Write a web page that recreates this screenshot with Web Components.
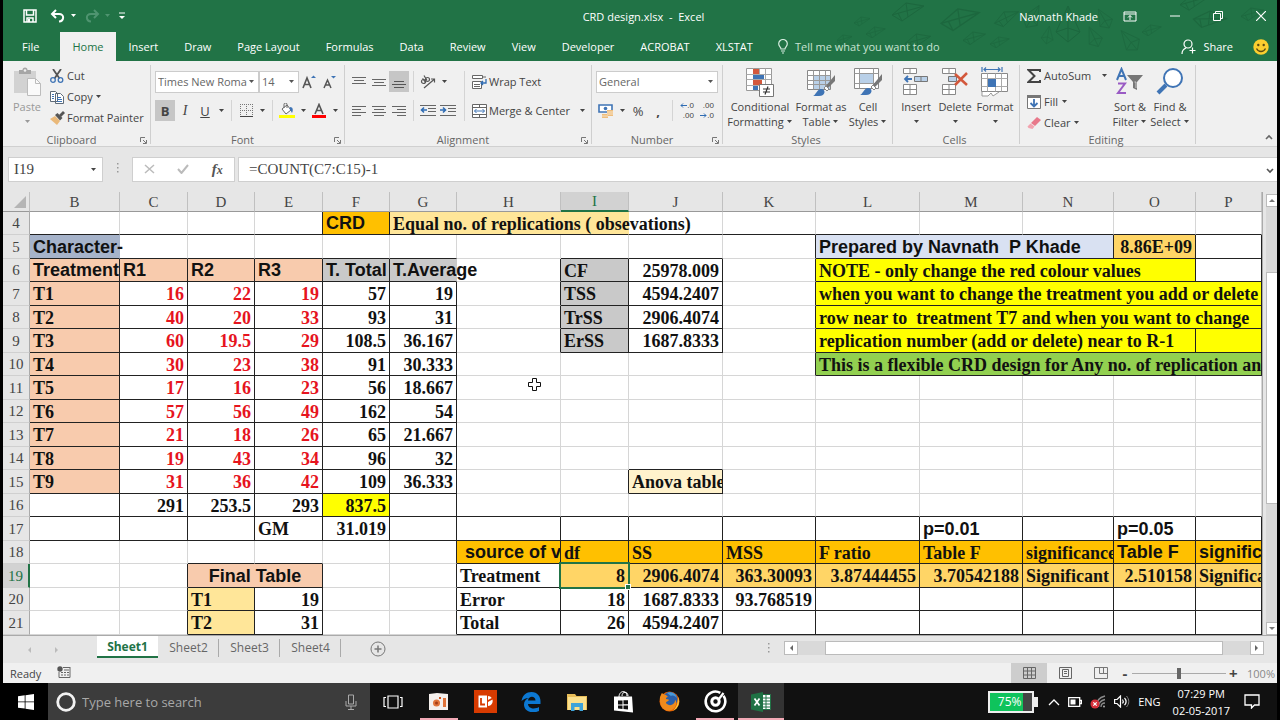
<!DOCTYPE html>
<html lang="en">
<head>
<meta charset="utf-8">
<title>CRD design.xlsx - Excel</title>
<style>
html, body { height: 100%; margin: 0; background: #000; }
body { font-family: "Open Sans", "Noto Sans", sans-serif; font-size: 11px; color: #444; overflow: hidden; }
</style>
</head>
<body>
<excel-window></excel-window>

<script>
/**
 * Spreadsheet window on a desktop with a taskbar.
 * Every part of the window is its own custom element, see the bottom of the script
 * for the element that puts them together.
 */

const base = `
 * { box-sizing: border-box; }
 button, input, select { font: inherit; color: inherit; background: none; border: 0; border-radius: 0; padding: 0; margin: 0; outline: 0; }
 button { cursor: default; white-space: nowrap; }
 svg { display: block; }
`;

function define(name, style, html) {
    customElements.define(name, class extends HTMLElement {
        constructor() {
            super();
            this.attachShadow({mode: 'open'});
        }
        connectedCallback() {
            const markup = typeof html === 'function' ? html(this) : html;
            this.shadowRoot.innerHTML = `<style>${base}${style}</style>${markup}`;
        }
    });
}

// [width, height, content]
const icons = {
    save: [14, 14, '<path d="M1 1h12v12H1z M3.500 1v5h7V1 M4 13V9h6v4" fill="none" stroke="#fff" stroke-width="1.500"/><path d="M5 10h2v3H5z" fill="#fff"/>'],
    undo: [16, 14, '<path d="M6 1L2 5l4 4M2.500 5H9c6 0 5 7 0 7.500" fill="none" stroke="#fff" stroke-width="2"/>'],
    redo: [16, 14, '<path d="M10 1l4 4-4 4M13.500 5H7C1 5 2 12 7 12.500" fill="none" stroke="#4f9470" stroke-width="2"/>'],
    customize: [8, 8, '<path d="M1 1h6" stroke="#fff"/><path d="M1 4h6L4 7z" fill="#fff"/>'],
    drop: [7, 4, '<path d="M1 0h5L3.500 3z" fill="currentColor"/>'],
    ribbonOpts: [14, 11, '<path d="M1 1h12v9H1zM1 3h12M7 9V4.500M5 6.500l2-2 2 2" fill="none" stroke="#fff"/>'],
    minimize: [10, 2, '<path d="M0 1h10" stroke="#fff"/>'],
    restore: [10, 10, '<path d="M.5 2.500h7v7h-7zM2.500 2.500v-2h7v7h-2" fill="none" stroke="#fff"/>'],
    close: [10, 10, '<path d="M0 0l10 10M10 0L0 10" stroke="#fff" stroke-width="1.200"/>'],
    bulb: [10, 15, '<path d="M3 10c0-2-2.300-2.500-2.300-5.200a4.300 4.300 0 0 1 8.600 0C9.300 7.500 7 8 7 10zM3 12h4M4 14h2" fill="none" stroke="#d5ecdf" stroke-width="1.200"/>'],
    person: [15, 15, '<circle cx="7" cy="5" r="4" fill="none" stroke="#fff" stroke-width="1.200"/><path d="M1 15c0-3 1.500-5 4-6M11.500 8.500v6M8.500 11.500h6" fill="none" stroke="#fff" stroke-width="1.200"/>'],
    smile: [16, 16, '<circle cx="8" cy="8" r="7.700" fill="#fbce2f"/><circle cx="5.300" cy="6" r="1.200" fill="#5b4a12"/><circle cx="10.700" cy="6" r="1.200" fill="#5b4a12"/><path d="M3.500 9.500c2 4 7 4 9 0" fill="none" stroke="#5b4a12" stroke-width="1.300"/>'],
    paste: [28, 30, '<path d="M1 4h22v22H1z" fill="#d2d2d2"/><path d="M6 3h3.500a2.500 2.500 0 0 1 5 0H18v4H6z" fill="#a6a6a6"/><circle cx="12" cy="3.500" r="1.300" fill="#f0f0f0"/><path d="M14.500 11.500h8l5 5v12h-13z" fill="#fafafa" stroke="#bcbcbc"/><path d="M22.500 11.500v5h5" fill="none" stroke="#bcbcbc"/>'],
    cut: [14, 14, '<path d="M3 0l6.500 9.500M11 0L4.500 9.500" stroke="#555" stroke-width="1.800"/><circle cx="3" cy="11" r="2.300" fill="none" stroke="#3f74b5" stroke-width="1.300"/><circle cx="10.500" cy="11" r="2.300" fill="none" stroke="#3f74b5" stroke-width="1.300"/>'],
    copy: [14, 14, '<path d="M.5 1.500h5l2 2v8h-7zM5.500 3.500h5l3 3v7h-8z" fill="#fff" stroke="#5f6b78"/><path d="M2 4.500h2M2 6.500h2M2 8.500h2M7 7.500h4M7 9.500h5M7 11.500h5" stroke="#3f74b5"/>'],
    painter: [15, 14, '<path d="M0 8l5-3 5 5-3 4z" fill="#eab97a"/><path d="M5 4l2.500-2 5 5L10 9.500z" fill="#555"/><path d="M9 4l4-4 2 2-4 4z" fill="#555"/>'],
    growFont: [14, 14, '<path d="M1 13L5 3l4 10M2.500 9.500h5" fill="none" stroke="#555" stroke-width="1.600"/><path d="M9 3h5l-2.500-2.500z" fill="#3f74b5"/>'],
    shrinkFont: [14, 14, '<path d="M2 13l3.500-8L9 13M3.500 10h4" fill="none" stroke="#555" stroke-width="1.500"/><path d="M9 1h5l-2.500 2.500z" fill="#3f74b5"/>'],
    borders: [13, 13, '<path d="M.5 0v12M12.500 0v12M0 .5h13M6.500 0v12M0 6.500h13" stroke="#777" stroke-dasharray="1 1"/><path d="M0 12.500h13" stroke="#444"/>'],
    fillColor: [16, 16, '<path d="M3 6l5-4 4 5-5 4z" fill="#fff" stroke="#666"/><path d="M5 5V1.500a1.500 1.500 0 0 1 3 0V5" fill="none" stroke="#666"/><path d="M11 4c3 0 3.500 3 2 6-1-1-1-3-2.500-4z" fill="#3f74b5"/><path d="M0 12h16v3H0z" fill="#ff0"/>'],
    fontColor: [14, 16, '<path d="M3 11L7 1.500 11 11M4.500 7.500h5" fill="none" stroke="#555" stroke-width="1.600"/><path d="M0 12h14v3H0z" fill="#f00"/>'],
    top: [14, 12, '<path d="M0 1.500h14M2 4.500h10M0 7.500h14" stroke="#666"/>'],
    middle: [14, 12, '<path d="M0 3.500h14M2 6.500h10M0 9.500h14" stroke="#666"/>'],
    bottom: [14, 14, '<path d="M2 6.500h10M0 9.500h14M2 12.500h10" stroke="#555"/>'],
    left: [14, 12, '<path d="M0 1.500h14M0 4.500h9M0 7.500h14M0 10.500h9" stroke="#666"/>'],
    center: [14, 12, '<path d="M0 1.500h14M2 4.500h10M0 7.500h14M2 10.500h10" stroke="#666"/>'],
    right: [14, 12, '<path d="M0 1.500h14M5 4.500h9M0 7.500h14M5 10.500h9" stroke="#666"/>'],
    orient: [16, 14, '<g fill="none" stroke="#555" stroke-width="1.200"><circle cx="3.500" cy="6.500" r="2"/><path d="M2.500 3.500l3.500 4"/><circle cx="7.500" cy="4.500" r="2"/><path d="M4 .5l3 5M4 13l10-8.500M11 4h3.500v3.500"/></g>'],
    outdent: [16, 13, '<path d="M0 1.500h16M8 4.500h8M8 7.500h8M0 11.500h16" stroke="#666"/><path d="M7 6H1.500M4 3.500L1.500 6 4 8.500" fill="none" stroke="#2f6cb3" stroke-width="1.600"/>'],
    indent: [16, 13, '<path d="M0 1.500h16M8 4.500h8M8 7.500h8M0 11.500h16" stroke="#666"/><path d="M0 6h5.500M3 3.500L5.500 6 3 8.500" fill="none" stroke="#2f6cb3" stroke-width="1.600"/>'],
    wrap: [15, 14, '<path d="M.5.500h10v3H.5zM.5 6.500h9v7h-9z" fill="#fff" stroke="#666"/><path d="M11 2h3M2 9.500h6M2 11.500h6" stroke="#666"/><path d="M14 4v4h-5M11 6L9 8l2 2" fill="none" stroke="#2f6cb3" stroke-width="1.300"/>'],
    merge: [15, 14, '<path d="M.5.500h14v13H.5zM.5 3.500h14M.5 10.500h14M7.500.5v3M7.500 10.500v3" fill="#fff" stroke="#666"/><path d="M2.500 7h10M4.500 5l-2 2 2 2M10.500 5l2 2-2 2" fill="none" stroke="#3f74b5"/>'],
    currency: [16, 14, '<path d="M1 1h13v7H1z" fill="#fff" stroke="#3f74b5" stroke-width="1.600"/><circle cx="7.500" cy="4.500" r="1.800" fill="#3f74b5"/><path d="M9 6h6v6H9z" fill="#eebd7c"/><path d="M4 10h6v4H4z" fill="#eebd7c"/><path d="M4 12h6M9 8h6M9 10h6" stroke="#f7e3c6"/>'],
    numLeft: [7, 5, '<path d="M7 2.500H1M3 .5l-2 2 2 2" fill="none" stroke="#2f6cb3"/>'],
    numRight: [7, 5, '<path d="M0 2.500h6M4 .5l2 2-2 2" fill="none" stroke="#2f6cb3"/>'],
    condFmt: [28, 30, '<path d="M.5 1.500h25v22H.5z" fill="#fff" stroke="#999"/><path d="M.5 7.500h25M.5 12.500h25M.5 18.500h25M7.500 1.500v22M13.500 1.500v22M19.500 1.500v22" stroke="#aaa"/><path d="M7 2h6v5H7z" fill="#d3583c"/><path d="M7 8h11v4H7z" fill="#3f74b5"/><path d="M7 13h9v5H7z" fill="#d3583c"/><path d="M7 19h5v4H7z" fill="#3f74b5"/><path d="M13.500 17.500h14v12h-14z" fill="#fff" stroke="#777"/><path d="M17 22h7M17 25h7M22 19.500l-3 8" stroke="#333" stroke-width="1.200"/>'],
    fmtTable: [28, 30, '<path d="M.5 3.500h23v19H.5z" fill="#fff" stroke="#888"/><path d="M6 8h17v14H6z" fill="#b9d0e8"/><path d="M.5 8.500h23M.5 13.500h23M.5 17.500h23M6.500 3.500v19M12.500 3.500v19M18.500 3.500v19" stroke="#999"/><path d="M28 8v6l-8 8-2-2z" fill="#777"/><path d="M19 19l3 3-2 2-3-3z" fill="#fff" stroke="#888"/><path d="M6 29c3-1 4-7 8-7 5 0 5 7-2 7z" fill="#3f74b5"/>'],
    cellStyles: [28, 30, '<path d="M.5 1.500h24v20H.5z" fill="#fff" stroke="#888"/><path d="M.5 6.500h24M.5 16.500h24M5.500 1.500v20M19.500 1.500v20" stroke="#999"/><path d="M6 7h13v9H6z" fill="#b9d0e8"/><path d="M28 7v6l-8 8-2-2z" fill="#777"/><path d="M19 18l3 3-2 2-3-3z" fill="#fff" stroke="#888"/><path d="M6 28c3-1 4-7 8-7 5 0 5 7-2 7z" fill="#3f74b5"/>'],
    insert: [26, 30, '<path d="M.5 1.500h13v5H.5zM7 1.500v5M.5 17.500h13v10H.5zM.5 22.500h13M7 17.500v10" fill="#fff" stroke="#888"/><path d="M11.500 9.500h13v5h-13zM18 9.500v5" fill="#b9d0e8" stroke="#777"/><path d="M9 12H2M5 9l-3 3 3 3" fill="none" stroke="#3f74b5" stroke-width="1.800"/>'],
    delete: [26, 30, '<path d="M.5 1.500h13v5H.5zM7 1.500v5M.5 17.500h13v10H.5zM.5 22.500h13M7 17.500v10" fill="#fff" stroke="#888"/><path d="M6.500 9.500h8v5h-8z" fill="#b9d0e8" stroke="#777"/><path d="M13 7l12 11M25 6L13 18" stroke="#d3583c" stroke-width="2.500"/>'],
    format: [28, 30, '<path d="M1 0v5M21 0v5M3 2.500h16M5 .5L3 2.500l2 2M17 .5l2 2-2 2" fill="none" stroke="#3f74b5" stroke-width="1.200"/><path d="M.5 6.500h26v18H.5z" fill="#fff" stroke="#888"/><path d="M.5 11.500h26M.5 19.500h26M6.500 6.500v18M14.500 6.500v18M20.500 6.500v18" stroke="#aaa"/><path d="M7 12h8v8H7z" fill="#3f74b5"/><path d="M1 25v4h6l3-3 2 3 6-4" fill="#fff" stroke="#999"/>'],
    sum: [14, 14, '<path d="M13 3V1H1.500l6 6-6 6H13v-2" fill="none" stroke="#444" stroke-width="2"/>'],
    fill: [14, 14, '<path d="M.5.500h13v13H.5z" fill="#fff" stroke="#777"/><path d="M0 0h14v3H0z" fill="#777"/><path d="M7 4v7M3.500 8L7 11.500 10.500 8" fill="none" stroke="#3f74b5" stroke-width="1.800"/>'],
    clear: [14, 12, '<path d="M4 6l6-6 4 3-6 6z" fill="#e8788a"/><path d="M3.500 6.500l4 3-2 2.500-4-1-1-1.500z" fill="#f2a3af"/>'],
    sort: [28, 30, '<path d="M1 13L5.500 2 10 13M2.500 9h6" fill="none" stroke="#3f74b5" stroke-width="2"/><path d="M2 16.500h7L2 26h8" fill="none" stroke="#9a5bc4" stroke-width="2"/><path d="M11 8h16l-6 7v8l-4-2v-6z" fill="#777"/><path d="M18.500 15h1.500v6" stroke="#ccc" fill="none"/>'],
    find: [28, 30, '<circle cx="17" cy="11" r="9" fill="#fff" stroke="#3f74b5" stroke-width="2"/><path d="M10 18l-8 8" stroke="#3f74b5" stroke-width="4"/>'],
    launcher: [7, 7, '<path d="M.5 5V.5H5M3 3l3 3M6.500 3v3.500H3" fill="none" stroke="#777"/>'],
    up: [8, 6, '<path d="M1 5l3-3 3 3" fill="none" stroke="#666" stroke-width="1.600"/>'],
    down: [8, 6, '<path d="M1 1l3 3 3-3" fill="none" stroke="#555" stroke-width="1.600"/>'],
    cancel: [11, 10, '<path d="M1 1l9 8M10 1L1 9" stroke="#bbb" stroke-width="1.500"/>'],
    accept: [12, 10, '<path d="M1 5l3.500 4L11 1" fill="none" stroke="#bbb" stroke-width="2"/>'],
    dots: [3, 12, '<path d="M1 1h1.500v1.500H1zM1 5h1.500v1.500H1zM1 9h1.500v1.500H1z" fill="#999"/>'],
    corner: [12, 12, '<path d="M12 0v12H0z" fill="#b5b5b5"/>'],
    arrowL: [5, 8, '<path d="M4 1v6L1 4z" fill="currentColor"/>'],
    arrowR: [5, 8, '<path d="M1 1v6l3-3z" fill="currentColor"/>'],
    arrowU: [8, 5, '<path d="M1 4h6L4 1z" fill="currentColor"/>'],
    arrowD: [8, 5, '<path d="M1 1h6L4 4z" fill="currentColor"/>'],
    plus: [16, 16, '<circle cx="8" cy="8" r="7" fill="none" stroke="#777"/><path d="M8 4.500v7M4.500 8h7" stroke="#777" stroke-width="1.500"/>'],
    macro: [14, 12, '<circle cx="3" cy="3" r="2.700" fill="#555"/><path d="M6 1.500h7M2 6v5.500h11V1M7 4h5" fill="none" stroke="#666"/><path d="M4 6.500h8M4 9h8" stroke="#666" stroke-dasharray="2 1"/>'],
    viewNormal: [13, 12, '<path d="M.5.500h12v11H.5zM.5 4h12M.5 8h12M4.500.5v11M8.500.5v11" fill="none" stroke="#666"/>'],
    viewLayout: [13, 12, '<path d="M.5.500h12v11H.5zM3.500 2.500h6v7h-6zM5 4.500h3M5 6.500h3" fill="none" stroke="#666"/>'],
    viewBreak: [14, 12, '<path d="M.5.500h13v11H.5zM5.500.5v6M9.500.5v6M5.500 6.500h8" fill="none" stroke="#777"/>'],
    start: [16, 16, '<path d="M0 2.300l6.700-1v6.200H0zM7.500 1.200L16 0v7.500H7.500zM0 8.300h6.700v6.300L0 13.700zM7.500 8.300H16V16l-8.500-1.200z" fill="#fff"/>'],
    cortana: [20, 20, '<circle cx="10" cy="10" r="8.300" fill="none" stroke="#f2f2f2" stroke-width="2.800"/>'],
    mic: [12, 16, '<path d="M3.500 1h5v9h-5z" fill="none" stroke="#aaa"/><path d="M1 7v5h10V7M6 12v3M3 15.500h6" fill="none" stroke="#aaa"/>'],
    taskView: [20, 14, '<path d="M5 1h10v12H5zM3 2.500H1v9h2M17 2.500h2v9h-2" fill="none" stroke="#fff" stroke-width="1.200"/>'],
    recorder: [20, 18, '<path d="M0 1l8-1 11 1v16H0z" fill="#f5f0ed"/><circle cx="7.500" cy="10" r="3.500" fill="#e0733a"/><circle cx="7.500" cy="10" r="1.500" fill="#a33d16"/><path d="M14 5h3v9h-3z" fill="#e0733a"/><path d="M10 4h2v2h-2z" fill="#d0551f"/>'],
    lp: [23, 23, '<path d="M0 0h23v23H0z" fill="#d83b01"/><path d="M4.500 5.500h8.500v12H4.500z" fill="#fff"/><path d="M7 8v6.500h4" fill="none" stroke="#d83b01" stroke-width="1.800"/><path d="M14 6c1.500 0 3 .8 3.700 2L14 10zM18.500 9.500c.8 3.500-1.200 6.500-4.500 6.500v-4z" fill="#fff"/>'],
    edge: [20, 20, '<path d="M0.500 9C1.500 3 5.500 0 10.500 0c6 0 9 4.500 9 9.500V12H7c.3 5 7 5.500 11 3v4c-6 3-15 1-15-6.500C3 9.500 5 7 7.500 6 4.500 6 2 7.500.5 9zM7 8.500h7.500C14.500 3.500 7.500 3.500 7 8.500z" fill="#0c78d2"/>'],
    explorer: [20, 18, '<path d="M0 1h8l1.500 2H20v14H0z" fill="#e8bd58"/><path d="M1 4h18v13H1z" fill="#fbe08d"/><path d="M4 10h12v8h-3.500v-4h-5v4H4z" fill="#3ea3d9"/>'],
    store: [20, 22, '<path d="M6 6c0-7 8-7 8-1M9 5c0-5 6-5 6 0" fill="none" stroke="#fff"/><path d="M1 5.500h18l1 16-19-2z" fill="#fff"/><path d="M5 9.500h4.500v4H5zM10.500 9.300H15v4h-4.500zM5 14.500h4.500v3.500L5 17.600zM10.500 14.500H15v4l-4.500-.5z" fill="#111"/>'],
    firefox: [21, 21, '<circle cx="10.500" cy="10.500" r="10" fill="#e66000"/><circle cx="11" cy="8.500" r="7.500" fill="#2a5ea8"/><path d="M8 2c3-2 9 0 10 5-2-2-4-3-6-2z" fill="#4a9ad8"/><path d="M1 6c1-2 1-3 2-4 1 1 2 1.500 4 2l2 2c-2 0-2 1-2 2 2 0 3 1 3 1-1 2-3 1-3 3 3 4 9 2 9-3 2 1 2 7-3 10-8 3-13-4-12-13z" fill="#f08a1c"/><path d="M19 6c2 5 1 11-5 14 3-3 5-7 5-14z" fill="#ffcb3c"/>'],
    groove: [23, 23, '<path d="M19.500 5.800a9.800 9.800 0 1 1-3.200-2.900" fill="none" stroke="#fff" stroke-width="2.600"/><circle cx="11.500" cy="11.500" r="3.700" fill="none" stroke="#fff" stroke-width="3"/><path d="M15 9l4.500-6" stroke="#fff" stroke-width="2.200"/>'],
    excel: [20, 20, '<path d="M10 2.500h9.500v15H10z" fill="#fff" stroke="#217346"/><path d="M11 6h8M11 9h8M11 12h8M11 15h8M15 3v14" stroke="#217346"/><path d="M0 2.500L12 0v20L0 17.500z" fill="#1f7244"/><path d="M3.500 6.500l5 7M8.500 6.500l-5 7" stroke="#fff" stroke-width="1.700"/>'],
    chevUp: [12, 8, '<path d="M1 7l5-5 5 5" fill="none" stroke="#fff" stroke-width="1.300"/>'],
    power: [14, 10, '<path d="M.7.700h11v8.600H.7zM12 3.500h1.500v3H12" fill="none" stroke="#fff" stroke-width="1.300"/><path d="M2.500 2.500h5v5h-5z" fill="#fff"/>'],
    wifi: [16, 15, '<path d="M6 13C6 7 9 3.500 15 2M8.500 13c0-4 2-6.500 6.500-7.500M11 13c0-2.500 1.500-4 4-4" fill="none" stroke="#8a8a8a" stroke-width="1.300"/><circle cx="14" cy="12.500" r="1" fill="#aaa"/><circle cx="5" cy="10" r="4.500" fill="#d6303a"/><path d="M3.300 8.300l3.400 3.400M6.700 8.300l-3.400 3.400" stroke="#fff" stroke-width="1.200"/>'],
    volume: [16, 13, '<path d="M.6 4.500h2.500L6.500 1v11L3 8.500H.6z" fill="none" stroke="#fff" stroke-width="1.200"/><path d="M8.500 4.500c1 1.300 1 2.700 0 4M10.500 2.800c2 2.300 2 5 0 7.400" fill="none" stroke="#fff" stroke-width="1.200"/><path d="M12.500 1c3 3.500 3 7.500 0 11" fill="none" stroke="#888"/>'],
    notify: [16, 15, '<path d="M1 1h14v10h-4.500L7.500 14v-3H1z" fill="none" stroke="#fff" stroke-width="1.300"/>'],
    cross: [15, 15, '<path d="M5.500 1.500h4v4h4v4h-4v4h-4v-4h-4v-4h4z" fill="#fff" stroke="#111"/>']
};

define('ui-icon', ':host { display: inline-block; flex: none; }', el => {
    const [w, h, body] = icons[el.getAttribute('name')];
    return `<svg width="${w}" height="${h}" viewBox="0 0 ${w} ${h}" aria-hidden="true">${body}</svg>`;
});

const ic = name => `<ui-icon name="${name}"></ui-icon>`;

/* ---------- title bar and ribbon tabs ---------- */

// paper planes behind the title: wide ones fly left, tall ones fly up or down
const wide = 'M0 12L14 0L32 3L10 18ZM14 0L16 14M0 12L32 3M6 10L10 18';
const tall = 'M12 0L24 26L12 36L0 26ZM12 0V36M0 26L12 22L24 26';
const planes = [
    [wide, 892, 3, 1, 0], [wide, 941, 9, 1.2, 0], [wide, 854, 17, .5, 0], [wide, 866, 27, .6, 0], [wide, 836, 35, .5, 0],
    [wide, 905, 34, .8, 0], [wide, 963, 32, .7, 0], [wide, 990, 37, .6, 0], [wide, 995, 12, .8, -10], [wide, 1142, 25, .6, 0],
    [tall, 1056, 6, 1, 0], [tall, 1042, 26, .5, 10], [tall, 1086, 26, .6, -25], [tall, 1120, 28, .7, -40], [tall, 1025, 4, .7, 30],
    [tall, 1096, 8, .6, -30], [wide, 1192, 10, 1, 15], [wide, 1180, -6, .9, 0], [wide, 1241, 8, .7, 0]
];

define('title-bar', `
 :host { display: grid; grid-template-columns: 1fr auto 1fr; align-items: center; height: 32px; position: relative; z-index: 1; background: #217346; color: #fff; padding: 0 11px 0 20px; }
 .art { position: absolute; right: 0; top: 0; opacity: .5; pointer-events: none; }
 .quick { display: flex; align-items: center; gap: 7px; height: 32px; position: relative; }
 .quick button, .win button { display: flex; align-items: center; gap: 4px; }
 .quick button:first-child { margin-right: 6px; }
 .title { white-space: pre; position: relative; padding-right: 2px; }
 .win { display: flex; align-items: center; justify-content: flex-end; gap: 33px; position: relative; height: 28px; }
 .win span { margin-right: -8px; }
`, `
 <svg class="art" width="440" height="61" viewBox="837 0 440 61" fill="none" stroke="#195c37" aria-hidden="true">${
    planes.map(([d, x, y, size, turn]) => `<path transform="translate(${x} ${y}) scale(${size}) rotate(${turn} 12 16)" d="${d}"/>`).join('')
 }</svg>
 <div class="quick">
   <button aria-label="Save">${ic('save')}</button>
   <button aria-label="Undo">${ic('undo')}${ic('drop')}</button>
   <button aria-label="Redo" style="color:#4f9470">${ic('redo')}${ic('drop')}</button>
   <button aria-label="Customize">${ic('customize')}</button>
 </div>
 <div class="title">CRD design.xlsx  -  Excel</div>
 <div class="win"><span>Navnath Khade</span>
   <button aria-label="Ribbon options">${ic('ribbonOpts')}</button>
   <button aria-label="Minimize">${ic('minimize')}</button>
   <button aria-label="Restore">${ic('restore')}</button>
   <button aria-label="Close">${ic('close')}</button>
 </div>`);

define('ribbon-tabs', `
 :host { display: flex; height: 29px; background: #217346; color: #fff; padding-left: 6px; align-items: stretch; }
 button { padding: 0 13px; line-height: 28px; }
 .active { background: #f0f0f0; color: #217346; margin-left: 8px; padding: 0 12px; }
 .tell { display: flex; align-items: center; gap: 7px; color: #c8e3d3; padding-left: 12px; }
 .share { display: flex; align-items: center; gap: 7px; margin-left: auto; padding-right: 20px; }
 .smile { display: flex; align-items: center; padding: 0 8px 0 0; }
`, `
 <button>File</button><button class="active">Home</button>${
    ['Insert', 'Draw', 'Page Layout', 'Formulas', 'Data', 'Review', 'View', 'Developer', 'ACROBAT', 'XLSTAT'].map(t => `<button>${t}</button>`).join('')
 }<button class="tell">${ic('bulb')}Tell me what you want to do</button>
 <button class="share">${ic('person')}Share</button>
 <button class="smile" aria-label="Feedback">${ic('smile')}</button>`);

/* ---------- ribbon ---------- */

define('ribbon-group', `
 :host { display: flex; flex-direction: column; flex: none; height: 82px; background: linear-gradient(#cfcfcf, #cfcfcf) no-repeat right top / 1px 79px; }
 .body { flex: 1; display: flex; min-height: 0; padding: 0 4px; }
 .foot { display: flex; align-items: center; height: 14px; line-height: 14px; color: #666; padding-right: 4px; }
 .foot span { flex: 1; text-align: center; }
`, el => `
 <div class="body"><slot></slot></div>
 <div class="foot"><span>${el.getAttribute('label')}</span>${el.hasAttribute('launcher') ? `<button aria-label="${el.getAttribute('label')} settings">${ic('launcher')}</button>` : ''}</div>`);

// Tall button: icon above a label of one or two lines
define('big-button', `
 :host { display: block; flex: none; }
 button { width: 100%; display: flex; flex-direction: column; align-items: center; line-height: 15px; }
 .pic { height: 34px; display: flex; align-items: center; }
 .line { display: flex; align-items: center; gap: 2px; min-height: 15px; }
`, el => {
    const [one, two] = el.getAttribute('label').split('|');
    return `<button><span class="pic">${ic(el.getAttribute('icon'))}</span><span class="line">${one}</span><span class="line">${two || ''}${ic('drop')}</span></button>`;
});

// Small button: icon and/or text, with an optional drop arrow
define('tool-button', `
 :host { display: flex; flex: none; height: 21px; }
 button { display: flex; align-items: center; height: 21px; }
 .pic { display: flex; justify-content: center; align-items: center; width: 20px; height: 21px; font-size: 13px; }
 .arrow { display: flex; justify-content: center; width: 12px; }
 :host([on]) .pic { background: #c6c6c6; }
 :host([wide]) { flex: 1; }
 :host([wide]) button { width: 100%; }
 :host([wide]) .arrow { margin-left: auto; }
`, el => {
    const icon = el.getAttribute('icon');
    const text = el.getAttribute('text') || '';
    return `<button aria-label="${el.getAttribute('label') || text}"><span class="pic">${icon ? ic(icon) : '<slot></slot>'}</span>${
        text ? `<span class="text">${text}</span>` : ''}${el.hasAttribute('drop') ? `<span class="arrow">${ic('drop')}</span>` : ''}</button>`;
});

define('drop-list', `
 :host { display: block; flex: none; }
 select { appearance: none; display: block; width: 100%; height: 22px; padding: 0 10px 0 2px; border: 1px solid #ccc; color: #666;
   background: #fff url("data:image/svg+xml,%3Csvg xmlns='http://www.w3.org/2000/svg' width='7' height='4'%3E%3Cpath d='M1 0h5L3.500 3z' fill='%23555'/%3E%3C/svg%3E") no-repeat right 3px center; }
`, el => `<select aria-label="${el.getAttribute('label')}"><option>${el.getAttribute('value')}</option></select>`);

define('excel-ribbon', `
 :host { display: flex; height: 86px; padding-top: 4px; background: #f0f0f0; border-bottom: 1px solid #d0d0d0; }
 .stack { display: flex; flex-direction: column; flex: none; }
 .rows { display: flex; flex-direction: column; gap: 8px; padding-top: 6px; flex: 1; min-width: 0; }
 .rows.fit { flex: none; }
 .row { display: flex; align-items: center; height: 21px; }
 .sep { flex: none; width: 1px; height: 21px; margin: 0 4px; background: #d4d4d4; }
 .sep.tall { height: 50px; margin: 6px 4px 0 6px; }
 .dim { color: #999; }
 .num { display: flex; flex-direction: column; align-items: flex-end; font: 8px/10px "Liberation Sans", sans-serif; }
 .num span { display: flex; align-items: center; }
 i.it { font-family: "Liberation Serif", serif; font-size: 14px; }
 .collapse { margin: auto 4px 3px auto; }
`, `
 <ribbon-group label="Clipboard" launcher style="width:148px">
   <big-button class="dim" icon="paste" label="Paste" style="width:40px"></big-button>
   <div class="stack">
     <tool-button icon="cut" text="Cut"></tool-button>
     <tool-button icon="copy" text="Copy" drop></tool-button>
     <tool-button icon="painter" text="Format Painter"></tool-button>
   </div>
 </ribbon-group>
 <ribbon-group label="Font" launcher style="width:194px">
   <div class="rows">
     <div class="row"><drop-list label="Font" value="Times New Roma" style="width:104px"></drop-list><drop-list label="Font size" value="14" style="width:40px"></drop-list><tool-button icon="growFont" label="Increase font size"></tool-button><tool-button icon="shrinkFont" label="Decrease font size"></tool-button></div>
     <div class="row"><tool-button on label="Bold"><b>B</b></tool-button><tool-button label="Italic"><i class="it">I</i></tool-button><tool-button label="Underline" drop><u>U</u></tool-button><span class="sep"></span><tool-button icon="borders" label="Borders" drop></tool-button><span class="sep"></span><tool-button icon="fillColor" label="Fill colour" drop></tool-button><tool-button icon="fontColor" label="Font colour" drop></tool-button></div>
   </div>
 </ribbon-group>
 <ribbon-group label="Alignment" launcher style="width:247px">
   <div class="rows fit">
     <div class="row"><tool-button icon="top" label="Top align"></tool-button><tool-button icon="middle" label="Middle align"></tool-button><tool-button on icon="bottom" label="Bottom align"></tool-button><span class="sep"></span><tool-button icon="orient" label="Orientation" drop></tool-button></div>
     <div class="row"><tool-button icon="left" label="Align left"></tool-button><tool-button icon="center" label="Center"></tool-button><tool-button icon="right" label="Align right"></tool-button><span class="sep"></span><tool-button icon="outdent" label="Decrease indent"></tool-button><tool-button icon="indent" label="Increase indent"></tool-button></div>
   </div>
   <span class="sep tall"></span>
   <div class="rows">
     <div class="row"><tool-button icon="wrap" text="Wrap Text"></tool-button></div>
     <div class="row"><tool-button wide icon="merge" text="Merge &amp; Center" drop></tool-button></div>
   </div>
 </ribbon-group>
 <ribbon-group label="Number" launcher style="width:131px">
   <div class="rows">
     <div class="row"><drop-list label="Number format" value="General" style="width:122px"></drop-list></div>
     <div class="row"><tool-button icon="currency" label="Accounting format" drop></tool-button><tool-button label="Percent style">%</tool-button><tool-button label="Comma style"><b>,</b></tool-button><span class="sep"></span><tool-button label="Increase decimal"><span class="num"><span>${ic('numLeft')}.0</span><span>.00</span></span></tool-button><tool-button label="Decrease decimal"><span class="num"><span>.00</span><span>${ic('numRight')}.0</span></span></tool-button></div>
   </div>
 </ribbon-group>
 <ribbon-group label="Styles" style="width:170px">
   <big-button icon="condFmt" label="Conditional|Formatting" style="width:66px"></big-button>
   <big-button icon="fmtTable" label="Format as|Table" style="width:56px"></big-button>
   <big-button icon="cellStyles" label="Cell|Styles" style="width:38px"></big-button>
 </ribbon-group>
 <ribbon-group label="Cells" style="width:127px">
   <big-button icon="insert" label="Insert" style="width:38px"></big-button>
   <big-button icon="delete" label="Delete" style="width:40px"></big-button>
   <big-button icon="format" label="Format" style="width:40px"></big-button>
 </ribbon-group>
 <ribbon-group label="Editing" style="width:176px">
   <div class="stack" style="width:86px">
     <tool-button wide icon="sum" text="AutoSum" drop></tool-button>
     <tool-button icon="fill" text="Fill" drop></tool-button>
     <tool-button icon="clear" text="Clear" drop></tool-button>
   </div>
   <big-button icon="sort" label="Sort &amp;|Filter" style="width:40px"></big-button>
   <big-button icon="find" label="Find &amp;|Select" style="width:40px"></big-button>
 </ribbon-group>
 <button class="collapse" aria-label="Collapse the ribbon">${ic('up')}</button>`);

/* ---------- formula bar ---------- */

define('formula-bar', `
 :host { display: flex; align-items: center; height: 45px; padding: 0 0 0 5px; background: #e6e6e6; font-family: "Liberation Serif", serif; font-size: 15px; }
 .box { display: flex; align-items: center; height: 25px; background: #fff; border: 1px solid #cfcfcf; }
 .name { width: 95px; padding: 0 5px; }
 .name input { flex: 1; min-width: 0; }
 .dots { margin: 0 13px; }
 .fx { width: 103px; justify-content: space-around; margin-right: 3px; }
 .fx i { font-weight: bold; color: #555; }
 .formula { flex: 1; padding: 0 3px 0 10px; border-right: 0; }
 .formula input { flex: 1; }
`, `
 <div class="box name"><input aria-label="Name box" value="I19">${ic('drop')}</div>
 <span class="dots">${ic('dots')}</span>
 <div class="box fx"><button aria-label="Cancel">${ic('cancel')}</button><button aria-label="Enter">${ic('accept')}</button><button aria-label="Insert function"><i>f</i><i style="font-size:12px">x</i></button></div>
 <div class="box formula"><input aria-label="Formula" value="=COUNT(C7:C15)-1"><button aria-label="Expand">${ic('down')}</button></div>`);

/* ---------- sheet ---------- */

const columns = { B: 90, C: 68, D: 67, E: 68, F: 67, G: 67, H: 104, I: 68, J: 94, K: 93, L: 104, M: 103, N: 91, O: 82, P: 0 };
const letters = Object.keys(columns);

// cell: [text, classes, columns covered]
const cells = {
    F4: ['CRD', 'gold sans'], G4: ['Equal no. of replications ( obsevations)', 'sand spill', 3],
    B5: ['Character-', 'slate sans spill'], L5: ['Prepared by Navnath&nbsp; P Khade', 'lilac sans', 3], O5: ['8.86E+09', 'amber num'],
    B6: ['Treatment', 'salmon sans'], C6: ['R1', 'salmon sans'], D6: ['R2', 'salmon sans'], E6: ['R3', 'salmon sans'], F6: ['T. Total', 'grey sans'], G6: ['T.Average', 'grey sans spill'],
    I6: ['CF', 'grey'], J6: ['25978.009', 'num'], I7: ['TSS', 'grey'], J7: ['4594.2407', 'num'],
    I8: ['TrSS', 'grey'], J8: ['2906.4074', 'num'], I9: ['ErSS', 'grey'], J9: ['1687.8333', 'num'],
    L6: ['NOTE - only change the red colour values', 'yellow', 4],
    L7: ['when you want to change the treatment you add or delete', 'yellow', 5],
    L8: ['row near to&nbsp; treatment T7 and when you want to change', 'yellow', 5],
    L9: ['replication number (add or delete) near to R-1', 'yellow', 4], P9: ['', 'yellow'],
    L10: ['This is a flexible CRD design for Any no. of replication and', 'green', 5],
    J15: ['Anova table', 'cream'],
    C16: ['291', 'num'], D16: ['253.5', 'num'], E16: ['293', 'num'], F16: ['837.5', 'yellow num'],
    E17: ['GM', ''], F17: ['31.019', 'num'], M17: ['p=0.01', 'sans'], O17: ['p=0.05', 'sans'],
    H18: ['&nbsp;source of v', 'gold sans'], I18: ['df', 'gold'], J18: ['SS', 'gold'], K18: ['MSS', 'gold'], L18: ['F ratio', 'gold'], M18: ['Table F', 'gold'], N18: ['significance', 'gold'], O18: ['Table F', 'gold sans'], P18: ['signific', 'gold sans'],
    D19: ['Final Table', 'salmon sans mid', 2], H19: ['Treatment', ''], I19: ['8', 'amber num selected'], J19: ['2906.4074', 'amber num'], K19: ['363.30093', 'amber num'], L19: ['3.87444455', 'amber num'], M19: ['3.70542188', 'amber num'], N19: ['Significant', 'amber'], O19: ['2.510158', 'amber num'], P19: ['Significa', 'amber'],
    D20: ['T1', 'sand'], E20: ['19', 'num'], H20: ['Error', ''], I20: ['18', 'num'], J20: ['1687.8333', 'num'], K20: ['93.768519', 'num'],
    D21: ['T2', 'sand'], E21: ['31', 'num'], H21: ['Total', ''], I21: ['26', 'num'], J21: ['4594.2407', 'num'],
    D22: ['', 'sand']
};

const treatments = [
    [16, 22, 19, 57, 19], [40, 20, 33, 93, 31], [60, 19.5, 29, 108.5, 36.167], [30, 23, 38, 91, 30.333], [17, 16, 23, 56, 18.667],
    [57, 56, 49, 162, 54], [21, 18, 26, 65, 21.667], [19, 43, 34, 96, 32], [31, 36, 42, 109, 36.333]
];
treatments.forEach((values, i) => {
    cells['B' + (i + 7)] = ['T' + (i + 1), 'salmon'];
    values.forEach((v, j) => cells['CDEFG'[j] + (i + 7)] = [v, j < 3 ? 'num red' : 'num']);
});

// ranges whose cells have black borders
const boxes = ['F4:F4', 'B6:G17', 'I6:J9', 'L5:P10', 'J15:J15', 'H17:P21', 'D19:E22'].map(r => r.match(/[A-Z]|\d+/g));
const boxed = (c, r) => boxes.some(b => c >= b[0] && c <= b[2] && r >= +b[1] && r <= +b[3]);

function renderRow(r) {
    let html = `<th class="${r === 19 ? 'current' : ''}">${r < 22 ? r : ''}</th>`;
    for (let i = 0; i < letters.length;) {
        const [text, classes, span = 1] = cells[letters[i] + r] || ['', ''];
        const last = letters[i + span - 1];
        const next = letters[i + span];
        const right = boxed(last, r) || (next && boxed(next, r));
        const bottom = r === 4 || boxed(last, r) || boxed(last, r + 1);
        html += `<td colspan="${span}" class="${classes}${right ? ' br' : ''}${bottom ? ' bb' : ''}">${text}</td>`;
        i += span;
    }
    return `<tr>${html}</tr>`;
}

define('sheet-grid', `
 :host { display: flex; flex: 1; min-height: 0; background: #e6e6e6; }
 .view { flex: 1; min-width: 0; overflow: hidden; position: relative; border-right: 1px solid #aaa; background: #fff; }
 table { table-layout: fixed; width: 100%; border-collapse: separate; border-spacing: 0; font: bold 18px/20px "Liberation Serif", serif; color: #111; }
 th { font: 15px/18px "Liberation Serif", serif; color: #444; background: #e6e6e6; padding: 0; border-right: 1px solid #aaa; border-bottom: 1px solid #d0d0d0; }
 thead th { height: 20px; border-right-color: #c0c0c0; border-bottom-color: #999; }
 thead .current { background: #d2d2d2; border-bottom: 2px solid #217346; color: #217346; }
 tbody .current { background: #d2d2d2; border-right: 2px solid #217346; color: #217346; }
 th ui-icon { float: right; margin-right: 3px; }
 tbody tr { height: 24px; }
 tbody tr:nth-child(odd) { height: 23px; }
 td { padding: 1px 3px 0; overflow: hidden; white-space: nowrap; border-right: 1px solid #d6d6d6; border-bottom: 1px solid #d6d6d6; }
 .br { border-right-color: #222; }
 .bb { border-bottom-color: #222; }
 .sans { font: bold 18px/20px "Liberation Sans", sans-serif; padding-top: 0; }
 .num { text-align: right; }
 .mid { text-align: center; }
 .red { color: #e6141e; }
 .gold { background: #ffc000; } .sand { background: #ffe699; } .slate { background: #a6b3ca; } .lilac { background: #d9e1f2; }
 .amber { background: #ffd566; } .salmon { background: #f8cbad; } .grey { background: #c9c9c9; } .yellow { background: #ff0; }
 .green { background: #92d050; } .cream { background: #fff2cc; }
 .spill { overflow: visible; border-right-color: transparent; }
 .selected { position: relative; overflow: visible; }
 .selected::before { content: ""; position: absolute; inset: -2px; border: 2px solid #217346; }
 .selected::after { content: ""; position: absolute; right: -3px; bottom: -3px; width: 4px; height: 4px; background: #217346; border: 1px solid #fff; box-sizing: content-box; }
 .pointer { position: absolute; left: 524px; top: 185px; }
 .scroll { width: 14px; padding: 2px 0 0 3px; display: flex; flex-direction: column; }
 .scroll button { height: 13px; border: 1px solid #bbb; border-right: 0; background: #fff; display: flex; align-items: center; justify-content: center; color: #777; }
 .scroll .track { background: #d9d9d9; flex: 65; }
 .scroll .thumb { background: #fff; flex: 232; border: 1px solid #bbb; border-right: 0; }
 .scroll .rest { flex: 119; }
`, `
 <div class="view">
   <table>
     <colgroup><col style="width:27px">${letters.map(l => `<col${columns[l] ? ` style="width:${columns[l]}px"` : ''}>`).join('')}</colgroup>
     <thead><tr><th>${ic('corner')}</th>${letters.map(l => `<th class="${l === 'I' ? 'current' : ''}">${l}</th>`).join('')}</tr></thead>
     <tbody>${Array.from({length: 19}, (_, i) => renderRow(i + 4)).join('')}</tbody>
   </table>
   <span class="pointer">${ic('cross')}</span>
 </div>
 <div class="scroll"><button aria-label="Scroll up">${ic('arrowU')}</button><span class="track"></span><span class="thumb"></span><span class="track rest"></span><button aria-label="Scroll down">${ic('arrowD')}</button></div>`);

define('sheet-tabs', `
 :host { display: flex; height: 28px; background: #e6e6e6; border-top: 1px solid #aaa; font-size: 12px; color: #666; }
 .nav { display: flex; align-items: center; gap: 22px; width: 94px; padding-left: 24px; color: #bbb; }
 .tab { width: 61px; height: 22px; position: relative; }
 .tab + .tab:not(.active)::after { content: ""; position: absolute; right: 0; top: 3px; height: 18px; border-right: 1px solid #aaa; }
 .active { background: #fff; color: #217346; font-weight: bold; border-bottom: 2px solid #217346; }
 .add { display: flex; align-items: center; margin: 0 0 2px 29px; }
 .bar { margin-left: auto; display: flex; align-items: center; width: 40%; max-width: 512px; padding: 0 13px 3px 0; }
 .bar button { flex: none; width: 14px; height: 14px; background: #fff; border: 1px solid #bbb; display: flex; align-items: center; justify-content: center; color: #666; }
 .bar ui-icon:first-child { margin-right: 14px; }
 .bar .arrow ui-icon { margin: 0; }
 .track { height: 14px; background: #d9d9d9; flex: 27; }
 .thumb { height: 14px; background: #fff; border: 1px solid #bbb; flex: 395; }
`, `
 <div class="nav">${ic('arrowL')}${ic('arrowR')}</div>
 <button class="tab active">Sheet1</button><button class="tab">Sheet2</button><button class="tab">Sheet3</button><button class="tab">Sheet4</button>
 <button class="add" aria-label="New sheet">${ic('plus')}</button>
 <div class="bar">${ic('dots')}<button class="arrow" aria-label="Scroll left">${ic('arrowL')}</button><span class="track"></span><span class="thumb"></span><span class="track"></span><button class="arrow" aria-label="Scroll right">${ic('arrowR')}</button></div>`);

define('status-bar', `
 :host { display: flex; align-items: center; height: 20px; padding-left: 7px; background: #f0f0f0; overflow: hidden; }
 .macro { margin-left: 16px; }
 .views { display: flex; margin-left: auto; }
 .views button { width: 36px; height: 20px; display: flex; align-items: center; justify-content: center; }
 .views .on { background: #cdcdcd; }
 .zoom { display: flex; align-items: center; gap: 3px; margin-left: 2px; }
 .zoom button { font-size: 15px; line-height: 16px; font-weight: bold; width: 8px; }
 input { appearance: none; width: 94px; height: 16px; background: linear-gradient(#aaa, #aaa) no-repeat center / 100% 1px; }
 input::-webkit-slider-thumb { appearance: none; width: 4px; height: 11px; background: #666; }
 .pct { color: #888; margin: 0 2px 0 7px; }
`, `
 <span>Ready</span><button class="macro" aria-label="Record macro">${ic('macro')}</button>
 <div class="views"><button class="on" aria-label="Normal">${ic('viewNormal')}</button><button aria-label="Page layout">${ic('viewLayout')}</button><button aria-label="Page break">${ic('viewBreak')}</button></div>
 <div class="zoom"><button aria-label="Zoom out">-</button><input type="range" aria-label="Zoom" value="50"><button aria-label="Zoom in">+</button><span class="pct">100%</span></div>`);

/* ---------- taskbar ---------- */

define('task-bar', `
 :host { display: flex; height: 37px; background: #111; color: #fff; font-size: 11px; }
 button { display: flex; align-items: center; justify-content: center; }
 .start { width: 45px; background: #000; }
 .search { display: flex; align-items: center; width: 322px; padding: 0 13px 0 8px; background: #3c3c3c; gap: 6px; }
 .search input { flex: 1; min-width: 0; font-size: 13px; }
 .search input::placeholder { color: #a8a8a8; }
 .app { width: 46px; position: relative; }
 .open::after { content: ""; position: absolute; left: 4px; right: 4px; bottom: 0; height: 2px; background: #f2a9b6; }
 .front { background: #333; }
 .front::after { left: 0; right: 0; }
 .tray { margin-left: auto; display: flex; align-items: center; gap: 8px; padding-right: 17px; }
 .battery { width: 46px; height: 22px; border: 2px solid #eee; background: linear-gradient(90deg, #0fc35c 78%, #444 78%); font-size: 12px; text-align: center; line-height: 18px; padding-right: 3px; position: relative; margin-right: 6px; }
 .battery::after { content: ""; position: absolute; right: -6px; top: 4px; width: 4px; height: 10px; background: #eee; }
 .clock { text-align: center; line-height: 17px; margin: 0 6px 0 4px; }
`, `
 <button class="start" aria-label="Start">${ic('start')}</button>
 <div class="search">${ic('cortana')}<input aria-label="Search" placeholder="Type here to search">${ic('mic')}</div>
 ${[['taskView', ''], ['recorder', 'open'], ['lp', ''], ['edge', ''], ['explorer', ''], ['store', ''], ['firefox', ''], ['groove', 'open'], ['excel', 'open front']]
    .map(([name, state]) => `<button class="app ${state}" aria-label="${name}">${ic(name)}</button>`).join('')}
 <div class="tray"><span class="battery">75%</span>${ic('chevUp')}${ic('power')}${ic('wifi')}${ic('volume')}<span>ENG</span><span class="clock">07:29 PM<br>02-05-2017</span>${ic('notify')}</div>`);

/* ---------- the whole window ---------- */

define('excel-window', `
 :host { display: flex; flex-direction: column; height: 100vh; padding: 0 3px; }
`, `
 <title-bar></title-bar>
 <ribbon-tabs></ribbon-tabs>
 <excel-ribbon></excel-ribbon>
 <formula-bar></formula-bar>
 <sheet-grid></sheet-grid>
 <sheet-tabs></sheet-tabs>
 <status-bar></status-bar>
 <task-bar></task-bar>`);
</script>
</body>
</html>
